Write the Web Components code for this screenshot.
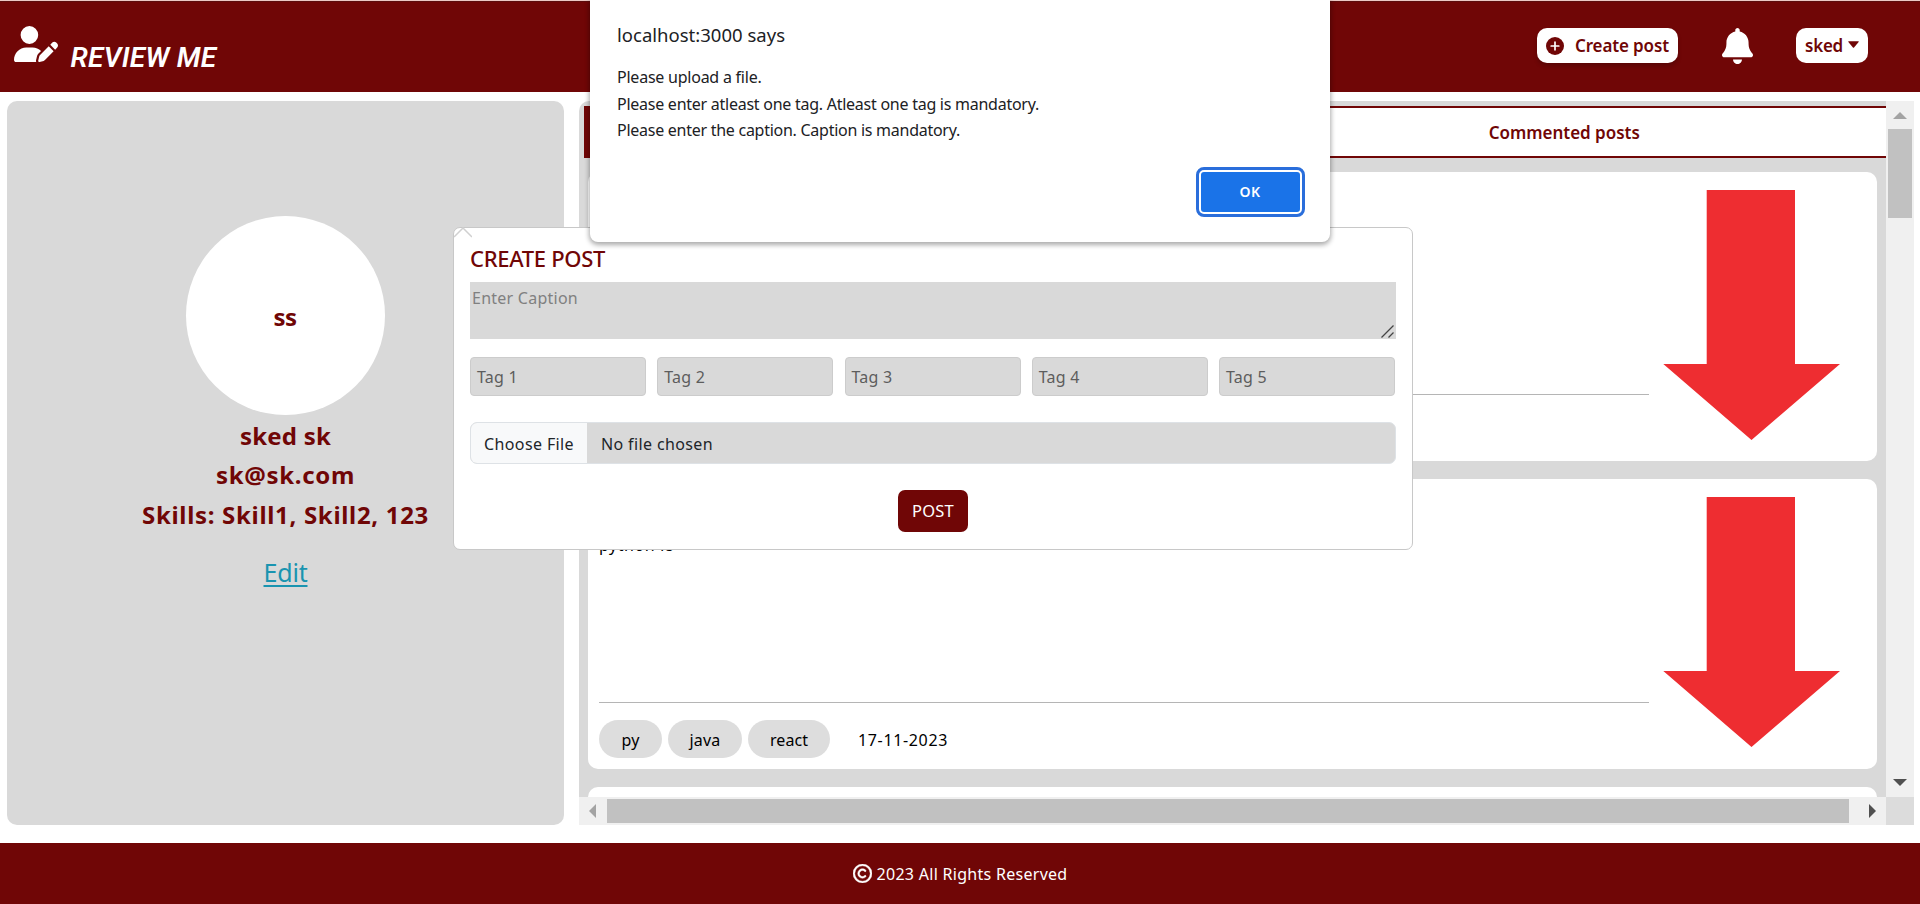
<!DOCTYPE html>
<html lang="en">
<head>
<meta charset="utf-8">
<title>Review Me</title>
<style>
html,body{margin:0;height:100%;overflow:hidden;background:#fff}
body{font-family:"Noto Sans","Open Sans",sans-serif;color:#212529}
</style>
</head>
<body>
<review-app></review-app>
<script>
const define = (name, html, setup) => customElements.define(name, class extends HTMLElement {
  connectedCallback() {
    if (this.shadowRoot) return;
    const t = document.createElement('template');
    t.innerHTML = html;
    this.attachShadow({mode: 'open'}).append(t.content.cloneNode(true));
    if (setup) setup(this, this.shadowRoot);
  }
});

/* Text of a fixed advance width: tracking is adjusted to fill it. */
define('fit-text', `<style>
:host{display:inline-block;white-space:pre;flex:none}
span{display:inline-block;white-space:pre;text-decoration:inherit}
</style><span><slot></slot></span>`, (el, root) => {
  const w = +el.getAttribute('w'), n = el.textContent.length;
  const s = root.querySelector('span');
  const natural = s.getBoundingClientRect().width;
  if (w && natural) s.style.letterSpacing = ((w - natural) / n).toFixed(3) + 'px';
});

define('app-header', `<style>
:host{display:flex;box-sizing:border-box;height:92px;background:#700606;border-top:1px solid #ecc9c4;box-shadow:inset 0 1px #5c0d0d;color:#fff;padding:0 52px 0 14px;align-items:flex-start}
.user{width:44px;height:36px;margin-top:25px}
.brand{font:italic 600 28px/36px Roboto,sans-serif;margin:39px 0 0 12.5px}
.sp{flex:1}
.btn{display:flex;align-items:center;box-sizing:border-box;height:35px;margin-top:27px;background:#fff;color:#700606;border-radius:10px;font-weight:600;font-size:17px;line-height:24px;padding:0 9px}
.create{width:141px;box-shadow:0 3px 4px #0003}
.create svg{width:18px;height:18px;margin-right:11px}
.bell{width:31px;height:36px;margin:27px 43.5px 0 43.5px}
.me{width:72px}
.me svg{width:12px;height:7px;margin:-2px 0 0 5px}
</style>
<svg class="user" viewBox="0 0 640 512" preserveAspectRatio="none" fill="currentColor"><path d="M224 256A128 128 0 1 0 224 0a128 128 0 1 0 0 256zm-45.700 48C79.800 304 0 383.800 0 482.300C0 498.700 13.300 512 29.700 512H322.800c-3.100-8.800-3.700-18.400-1.400-27.800l15-60.100c2.800-11.300 8.600-21.500 16.800-29.700l40.300-40.300c-32.100-31-75.700-50.100-123.900-50.100H178.300zm435.500-68.300c-15.600-15.600-40.900-15.600-56.600 0l-29.400 29.400 71 71 29.400-29.400c15.600-15.600 15.600-40.900 0-56.600l-14.400-14.400zM375.900 417c-4.100 4.100-7 9.200-8.400 14.900l-15 60.100c-1.400 5.500 .2 11.200 4.200 15.200s9.700 5.600 15.200 4.200l60.100-15c5.600-1.400 10.800-4.300 14.900-8.400L576.100 358.700l-71-71L375.900 417z"/></svg>
<fit-text class="brand" w="146">REVIEW ME</fit-text>
<span class="sp"></span>
<div class="btn create"><svg viewBox="0 0 18 18"><circle cx="9" cy="9" r="9" fill="#700606"/><path d="M9 5.200v7.600M5.200 9h7.600" stroke="#fff" stroke-width="1.700" stroke-linecap="round"/></svg><fit-text w="94">Create post</fit-text></div>
<svg class="bell" viewBox="0 0 448 512" preserveAspectRatio="none" fill="currentColor"><path d="M224 0c-17.700 0-32 14.300-32 32V51.200C119 66 64 130.600 64 208v18.800c0 47-17.300 92.400-48.500 127.600l-7.400 8.300c-8.400 9.400-10.400 22.900-5.300 34.400S19.400 416 32 416H416c12.600 0 24-7.400 29.200-18.900s3.100-25-5.300-34.400l-7.400-8.300C401.300 319.200 384 273.900 384 226.800V208c0-77.400-55-142-128-156.800V32c0-17.700-14.300-32-32-32zm45.300 493.300c12-12 18.700-28.300 18.700-45.300H224 160c0 17 6.700 33.300 18.700 45.300s28.300 18.700 45.300 18.700s33.300-6.700 45.300-18.700z"/></svg>
<div class="btn me"><fit-text w="38">sked</fit-text><svg viewBox="0 0 12 7"><path d="M.6 0H11.400Q12 .3 11.600 .9L6.600 6.700Q6 7.200 5.400 6.700L.4 .9Q0 .3 .6 0Z" fill="#700606"/></svg></div>`);

define('profile-panel', `<style>
:host{display:flex;flex-direction:column;align-items:center;box-sizing:border-box;background:#d9d9d9;border-radius:10px;padding-top:115px;color:#700606;font-weight:700;font-size:24px;line-height:40px}
.avatar{width:199px;height:199px;border-radius:50%;background:#fff;display:flex;align-items:center;justify-content:center}
.n{margin:1px 0 -1px}
.avatar fit-text{margin:3px 1px 0 0}
a{color:#1a94b0;font-weight:400;font-size:25px;line-height:32px;margin-top:21px}
a fit-text{text-decoration:underline 2px;text-underline-offset:3px}
</style>
<div class="avatar"><fit-text w="23">ss</fit-text></div>
<fit-text class="n" w="91">sked sk</fit-text>
<fit-text w="139">sk@sk.com</fit-text>
<fit-text w="287">Skills: Skill1, Skill2, 123</fit-text>
<a><fit-text w="44">Edit</fit-text></a>`);

define('post-tag', `<style>
:host{display:flex;align-items:center;justify-content:center;box-sizing:border-box;height:38px;border-radius:19px;background:#ddd;font-size:16px;line-height:24px;padding-top:2px}
</style><slot></slot>`);

define('post-card', `<style>
:host{display:flex;flex:none;box-sizing:border-box;height:289.5px;background:#fff;border-radius:10px;padding:0 36px 0 11px;color:#000}
.body{width:1050px;display:flex;flex-direction:column}
.text{height:223.5px;box-sizing:border-box;padding-top:54px;font-size:16px;line-height:24px;border-bottom:1px solid #b5b5b5}
.row{display:flex;gap:6px;padding-top:17.5px;align-items:center}
.pic{width:178px;height:251px;margin:18px 0 0 14px}
</style>
<div class="body"><div class="text"><slot></slot></div><div class="row"><slot name="tags"></slot></div></div>
<svg class="pic" viewBox="0 0 178 251"><path d="M43.700 0H132V174H177L88.500 250L.3 174H43.700Z" fill="#ee2d31"/></svg>`);

define('scroll-bar', `<style>
:host{display:flex;box-sizing:border-box;background:#f0f0f0;align-items:center}
:host([dir-v]){flex-direction:column}
.thumb{background:#c1c1c1;flex:none}
svg{flex:none;width:28px;height:28px}
i{flex:1}
</style><svg viewBox="0 0 28 28"></svg><div class="thumb"></div><i></i><svg viewBox="0 0 28 28"></svg>`, (el, root) => {
  const [a, b] = root.querySelectorAll('svg'), th = root.querySelector('.thumb');
  const v = el.hasAttribute('dir-v'), len = el.getAttribute('len') + 'px';
  a.innerHTML = v ? '<path d="M7 18L14 11L21 18Z" fill="#a3a3a3"/>' : '<path d="M17 7L10 14L17 21Z" fill="#a3a3a3"/>';
  b.innerHTML = v ? '<path d="M7 10L14 17L21 10Z" fill="#505050"/>' : '<path d="M11 7L18 14L11 21Z" fill="#505050"/>';
  th.style.cssText = v ? 'width:24px;height:' + len : 'height:24px;width:' + len;
});

define('post-feed', `<style>
:host{display:grid;grid-template:696px 28px / 1307px 28px;background:#d9d9d9;border-radius:10px 0 0 0;overflow:hidden}
.view{overflow:hidden;padding:5px 0 0 5px}
.tabs{display:flex;width:1307px;height:52px;font-weight:600;font-size:17px}
.tab{flex:1;box-sizing:border-box;display:flex;align-items:center;justify-content:center;border:solid #700606;border-width:2px 0;background:#fff;color:#700606}
.on{background:#700606;color:#fff}
.list{display:flex;flex-direction:column;gap:18px;margin:13.5px 9px 0 4px}
.corner{background:#dcdcdc}
</style>
<div class="view"><div class="tabs"><div class="tab on"></div><div class="tab"><fit-text w="151">Commented posts</fit-text></div></div>
<div class="list"><slot></slot></div></div>
<scroll-bar dir-v len="89"></scroll-bar><scroll-bar len="1242"></scroll-bar><div class="corner"></div>`);

define('app-footer', `<style>
:host{display:flex;align-items:center;justify-content:center;background:#700606;color:#fff;font-size:16px;line-height:24px;gap:5px}
svg{width:19px;height:19px}
</style><svg viewBox="0 0 512 512" fill="currentColor"><path d="M256 48a208 208 0 1 1 0 416 208 208 0 1 1 0-416zm0 464A256 256 0 1 0 256 0a256 256 0 1 0 0 512zM199.400 312.600c-31.200-31.200-31.200-81.900 0-113.100s81.900-31.200 113.100 0c9.400 9.400 24.600 9.400 33.900 0s9.400-24.600 0-33.900c-50-50-131-50-181 0s-50 131 0 181s131 50 181 0c9.400-9.400 9.400-24.600 0-33.900s-24.600-9.400-33.900 0c-31.200 31.200-81.900 31.200-113.100 0z" stroke="currentColor" stroke-width="12"/></svg><fit-text w="191">2023 All Rights Reserved</fit-text>`);

define('create-post', `<style>
:host{display:block;box-sizing:border-box;background:#fff;border:1px solid #c8c8c8;border-radius:7px;padding:16px 16px 0 16px;font-size:16px;line-height:24px}
.tip{position:absolute;left:0;top:-1px;width:18px;height:11px}
h2{margin:0;font-weight:500;font-size:22px;line-height:28px;color:#700606;height:38px}
.ta{position:relative;box-sizing:border-box;height:57px;background:#d9d9d9;color:#808080;padding:4px 2px;line-height:24px}
.ta svg{position:absolute;right:2px;bottom:1px;width:13px;height:13px}
.tags{display:flex;gap:11.25px;margin:18px 1px 0 0}
.tags div{flex:1;box-sizing:border-box;height:39px;background:#d9d9d9;border:1px solid #ccc;border-radius:4px;padding:7px 6px;color:#5d5d5d}
.file{display:flex;box-sizing:border-box;height:42px;margin-top:26px;background:#d9d9d9;border:1px solid #dee2e6;border-radius:7px;overflow:hidden;align-items:center}
.file>fit-text{margin-top:1px}
.file .b{background:#f8f9fa;width:116px;box-sizing:border-box;align-self:stretch;padding:9px 0 0 13px;margin-right:14px}
.post{display:flex;align-items:center;justify-content:center;width:70px;height:42px;margin:26px auto 0;background:#700606;border-radius:7px;color:#fff;font-size:16.5px}
</style>
<svg class="tip" viewBox="0 0 18 11"><path d="M0 10L9 1L18 10" fill="none" stroke="#d0d0d0" stroke-width="1.500"/></svg>
<h2><fit-text w="135">CREATE POST</fit-text></h2>
<div class="ta"><fit-text w="106">Enter Caption</fit-text><svg viewBox="0 0 13 13"><path d="M.5 12.500L12.500 .5M7.500 12.500L12.500 7.500" stroke="#444" stroke-width="1.300"/></svg></div>
<div class="tags"><div><fit-text w="41">Tag 1</fit-text></div><div><fit-text w="41">Tag 2</fit-text></div><div><fit-text w="41">Tag 3</fit-text></div><div><fit-text w="41">Tag 4</fit-text></div><div><fit-text w="41">Tag 5</fit-text></div></div>
<div class="file"><div class="b"><fit-text w="90">Choose File</fit-text></div><fit-text w="112">No file chosen</fit-text></div>
<div class="post"><fit-text w="42">POST</fit-text></div>`);

define('alert-dialog', `<style>
:host{display:flex;flex-direction:column;box-sizing:border-box;background:#fff;border-radius:0 0 8px 8px;box-shadow:0 2px 5px 1px #0005;padding:20px 25px 0 27px;color:#202124;font-size:16px;line-height:26.7px}
.t{font-size:18.5px;line-height:30px;margin-bottom:14px}
.ok{align-self:flex-end;box-sizing:border-box;width:109px;height:50px;margin-top:23px;border:3px solid #2a6edb;border-radius:8px;padding:2px;background:#fff}
.ok div{height:100%;background:#1a73e8;border-radius:3px;color:#fff;font-size:14px;font-weight:600;display:flex;align-items:center;justify-content:center;padding-right:1px}
</style>
<fit-text class="t" w="168">localhost:3000 says</fit-text>
<fit-text w="144.5">Please upload a file.</fit-text>
<fit-text w="422">Please enter atleast one tag. Atleast one tag is mandatory.</fit-text>
<fit-text w="343">Please enter the caption. Caption is mandatory.</fit-text>
<div class="ok"><div><fit-text w="21">OK</fit-text></div></div>`);

define('review-app', `<style>
:host{display:grid;position:relative;width:1920px;height:904px;grid-template-rows:92px 751px 61px;overflow:hidden}
main{display:grid;grid-template-columns:557px 1335px;column-gap:15px;padding:9px 0 0 7px;align-items:start}
profile-panel{height:724px}
create-post{position:absolute;left:453px;top:227px;width:960px;height:323px}
alert-dialog{position:absolute;left:590px;top:0;width:740px;height:242px}
</style>
<app-header></app-header>
<main><profile-panel></profile-panel>
<post-feed>
<post-card></post-card>
<post-card><fit-text w="75">python fs</fit-text>
<post-tag slot="tags" style="width:63px"><fit-text w="18">py</fit-text></post-tag>
<post-tag slot="tags" style="width:74px"><fit-text w="31">java</fit-text></post-tag>
<post-tag slot="tags" style="width:82px"><fit-text w="38">react</fit-text></post-tag>
<fit-text slot="tags" w="90" style="margin-left:22px;padding-top:2px;font-size:16px">17-11-2023</fit-text></post-card>
<post-card></post-card>
</post-feed></main>
<app-footer></app-footer>
<create-post></create-post>
<alert-dialog></alert-dialog>`);
</script>
</body>
</html>
